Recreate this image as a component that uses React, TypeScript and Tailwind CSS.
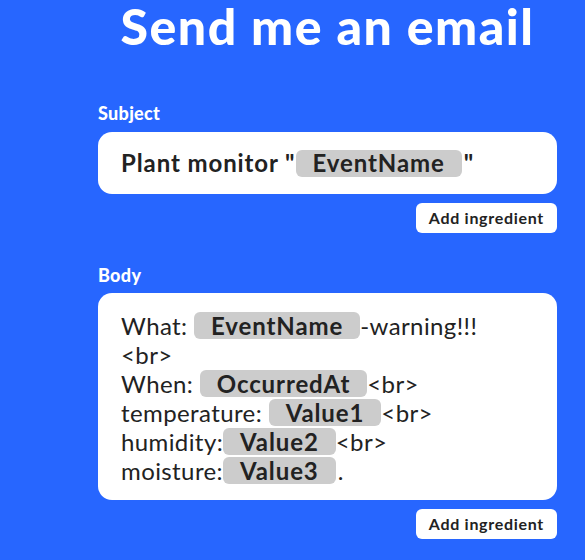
import React from "react";

const Pill = ({ children }: { children: React.ReactNode }) => (
  <span className="inline-flex items-center bg-[#cccccc] rounded-[6px] px-[17px] h-[27px] font-bold tracking-[0.9px]">
    {children}
  </span>
);

const T = ({ children }: { children: React.ReactNode }) => (
  <span className="whitespace-pre">{children}</span>
);

const Line = ({ children }: { children: React.ReactNode }) => (
  <div className="flex items-center h-[29px]">{children}</div>
);

const Btn = () => (
  <div className="flex justify-end">
    <button className="bg-white rounded-[6px] h-[30px] px-[13px] text-[16px] font-bold tracking-[0.7px] text-[#222]">
      Add ingredient
    </button>
  </div>
);

export default function App() {
  return (
    <div
      className="w-full h-[560px] bg-[#2766ff] overflow-hidden text-[#222]"
      style={{ fontFamily: "Lato, 'Noto Sans', sans-serif" }}
    >
      <div className="ml-[98px] w-[459px] flex flex-col">
        <h1 className="text-center text-white font-black text-[50px] leading-[50px] mt-[1px] tracking-[1.5px]">
          Send me an email
        </h1>
        <div className="mt-[51px] text-white font-black text-[18px] leading-[22px] tracking-[0.3px]">Subject</div>
        <div className="mt-[8px] bg-white rounded-[14px] h-[62px] flex items-center px-[23px] text-[24px] font-bold">
          <span className="whitespace-pre tracking-[0.9px]">Plant monitor "</span>
          <Pill>EventName</Pill>
          <span className="ml-[2px]">"</span>
        </div>
        <div className="mt-[9px]">
          <Btn />
        </div>
        <div className="mt-[31px] text-white font-black text-[18px] leading-[22px] tracking-[0.3px]">Body</div>
        <div className="mt-[7px] bg-white rounded-[14px] h-[207px] px-[23px] pt-[18px] text-[24px] tracking-[0.4px]">
          <Line>
            <T>What: </T>
            <Pill>EventName</Pill>
            <T>-warning!!!</T>
          </Line>
          <Line>
            <T>&lt;br&gt;</T>
          </Line>
          <Line>
            <T>When: </T>
            <Pill>OccurredAt</Pill>
            <T>&lt;br&gt;</T>
          </Line>
          <Line>
            <T>temperature: </T>
            <Pill>Value1</Pill>
            <T>&lt;br&gt;</T>
          </Line>
          <Line>
            <T>humidity:</T>
            <Pill>Value2</Pill>
            <T>&lt;br&gt;</T>
          </Line>
          <Line>
            <T>moisture:</T>
            <Pill>Value3</Pill>
            <span className="ml-[2px]">.</span>
          </Line>
        </div>
        <div className="mt-[9px]">
          <Btn />
        </div>
      </div>
    </div>
  );
}
